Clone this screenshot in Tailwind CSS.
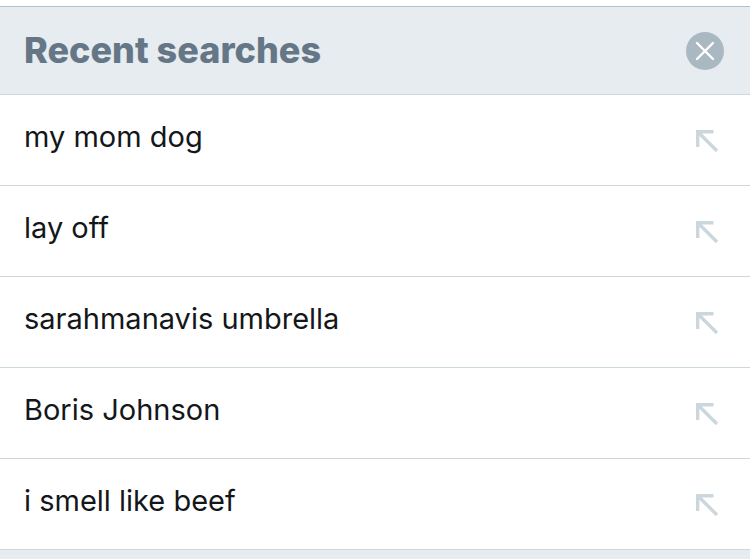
<!DOCTYPE html>
<html lang="en">
<head>
    <meta charset="UTF-8">
    <meta name="viewport" content="width=device-width, initial-scale=1.0">
    <title>Recent searches</title>
    <script src="https://cdn.jsdelivr.net/npm/@tailwindcss/browser@4"></script>
</head>
<body class="bg-[#e6ecf0] font-['Inter',sans-serif]">
    <div class="w-full bg-white pt-[6px]">

        <!-- Header -->
        <div class="flex items-center justify-between h-[89px] pl-6 pr-[26px] bg-[#e6ecf0] border-y border-t-[#b4c0c9] border-b-[#ccd6dd]">
            <h1 class="text-4xl pb-[2px] font-extrabold text-[#657786]">Recent searches</h1>
            <button type="button" aria-label="Clear recent searches" class="size-[38px] rounded-full bg-[#aab8c2]">
                <svg class="size-[38px]" viewBox="0 0 38 38" fill="none" stroke="white" stroke-width="2.4" stroke-linecap="round">
                    <path d="M11 11L27 27M27 11L11 27"/>
                </svg>
            </button>
        </div>

        <!-- Searches -->
        <ul id="searches"></ul>
    </div>

    <template id="row">
        <li class="flex items-center justify-between h-[91px] pl-6 pr-[31px] border-b border-[#ccd6dd]">
            <a href="#" class="text-[29px] leading-9 pb-[6px] text-[#14171a]"></a>
            <button type="button" aria-label="Edit search">
                <svg class="size-6" viewBox="0 0 24 24" fill="none" stroke="#ccd6dd" stroke-width="3.4">
                    <path d="M2.7 19V3.7H18.5M2.7 3.7L22 23"/>
                </svg>
            </button>
        </li>
    </template>

    <script>
        const searches = ['my mom dog', 'lay off', 'sarahmanavis umbrella', 'Boris Johnson', 'i smell like beef']
        const list = document.querySelector('#searches')
        const row = document.querySelector('#row')

        searches.forEach((text) => {
            const item = row.content.cloneNode(true)
            item.querySelector('a').textContent = text
            list.append(item)
        })
    </script>
</body>
</html>
